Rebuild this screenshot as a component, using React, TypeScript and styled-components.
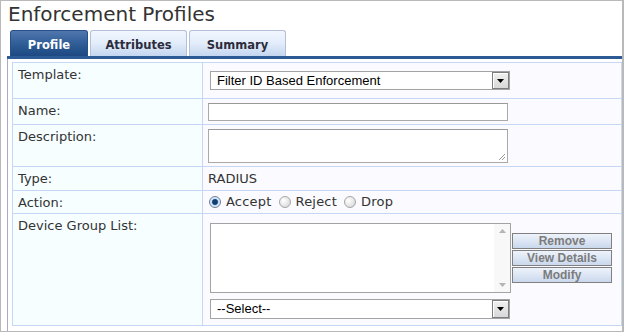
import React from 'react';
import styled, {createGlobalStyle} from 'styled-components';

const GlobalStyle = createGlobalStyle`
  html, body {
    margin: 0;
    padding: 0;
    background: #fff;
  }
  body {
    font-family: 'DejaVu Sans', Verdana, sans-serif;
  }
`;

const LINE = '#c6d7f3';

const Frame = styled.div`
  box-sizing: border-box;
  width: 624px;
  height: 332px;
  border: 1px solid #b9b9b9;
  border-right-width: 2px;
  display: flex;
  flex-direction: column;
`;

const Title = styled.h1`
  box-sizing: border-box;
  height: 29px;
  margin: 0;
  padding: 1px 0 0 7px;
  font: 400 20px/24px 'DejaVu Sans', Verdana, sans-serif;
  color: #333;
`;

const TabBar = styled.div`
  display: flex;
  align-items: flex-end;
  gap: 2px;
  height: 26px;
  margin-left: 6px;
  padding-left: 3px;
  border-bottom: 3px solid #2b5a95;
`;

const Tab = styled.div<{active?: boolean; w: number}>`
  box-sizing: border-box;
  width: ${p => p.w}px;
  height: 26px;
  padding-top: 7px;
  border: 1px solid ${p => (p.active ? '#27508a' : '#b4bfdc')};
  border-bottom: none;
  border-radius: 3px 3px 0 0;
  background: ${p =>
    p.active
      ? 'linear-gradient(#5177ad 0%, #33609a 45%, #1d4881 100%)'
      : 'linear-gradient(#f2f7fe 0%, #e2ecfa 50%, #c4d6ef 100%)'};
  color: ${p => (p.active ? '#fff' : '#2c2c3c')};
  font: 700 11.5px/14px 'DejaVu Sans', Verdana, sans-serif;
  text-align: center;
`;

const Content = styled.div`
  flex: 1;
  margin-left: 6px;
  padding: 3px 0 0 4px;
  border-left: 1px solid #a9abc9;
`;

const Table = styled.div`
  display: grid;
  width: 610px;
  box-sizing: border-box;
  grid-template-columns: 190px 1fr;
  grid-template-rows: 36px 26px 42px 24px 23px 112px;
  border-top: 1px solid ${LINE};
  border-left: 1px solid ${LINE};
`;

const Label = styled.div`
  box-sizing: border-box;
  padding: 4px 5px;
  background: #f6feff;
  border-right: 1px solid ${LINE};
  border-bottom: 1px solid ${LINE};
  font-size: 13px;
  line-height: 16px;
  color: #333;
`;

const Value = styled.div<{top?: boolean}>`
  box-sizing: border-box;
  display: flex;
  align-items: ${p => (p.top ? 'flex-start' : 'center')};
  padding: ${p => (p.top ? '9px 0 0 7px' : '0 0 0 5px')};
  background: #fafaff;
  border-right: 1px solid ${LINE};
  border-bottom: 1px solid ${LINE};
  font-size: 13px;
  line-height: 16px;
  color: #333;
`;

const SelectBox = styled.div<{h: number; indent?: number}>`
  box-sizing: border-box;
  display: flex;
  align-items: stretch;
  width: 300px;
  height: ${p => p.h}px;
  margin-left: ${p => p.indent ?? 0}px;
  border: 1px solid #a3a3a3;
  background: #fff;
`;

const SelectText = styled.span`
  flex: 1;
  padding-left: 6px;
  font: 13px/17px 'Liberation Sans', Arial, sans-serif;
  color: #000;
  white-space: nowrap;
  overflow: hidden;
`;

const ArrowButton = styled.span`
  box-sizing: border-box;
  width: 17px;
  display: flex;
  align-items: center;
  justify-content: center;
  border: 1px solid #7d7d7d;
  box-shadow: inset 1px 1px 0 #fff;
  background: linear-gradient(#f0f0f0, #d8d8d8);
`;

const Select = ({text, h, indent}: {text: string; h: number; indent?: number}) => (
  <SelectBox h={h} indent={indent}>
    <SelectText>{text}</SelectText>
    <ArrowButton>
      <svg width="7" height="4" viewBox="0 0 7 4">
        <path d="M0 0h7L3.5 4z" fill="#000" />
      </svg>
    </ArrowButton>
  </SelectBox>
);

const TextInput = styled.div`
  box-sizing: border-box;
  width: 300px;
  height: 18px;
  border: 1px solid #a9a9a9;
  border-top-color: #999;
  background: #fff;
`;

const TextArea = styled.div`
  position: relative;
  box-sizing: border-box;
  width: 300px;
  height: 34px;
  border: 1px solid #a9a9a9;
  border-top-color: #999;
  background: #fff;
`;

const Grip = styled.svg`
  position: absolute;
  right: 1px;
  bottom: 1px;
`;

const RadioGroup = styled.div`
  display: flex;
  align-items: center;
  padding-left: 1px;
`;

const RadioCircle = styled.span<{checked?: boolean}>`
  box-sizing: border-box;
  width: 12px;
  height: 12px;
  border-radius: 50%;
  border: 1px solid ${p => (p.checked ? '#6f7d95' : '#a6a6a6')};
  background: ${p =>
    p.checked
      ? 'radial-gradient(circle, #173d6e 0 2.4px, #4f86c4 2.9px, #cfe3f8 3.6px, #eef5fd 100%)'
      : 'radial-gradient(circle at 35% 35%, #ffffff 0, #e4e4e4 60%, #cfcfcf 100%)'};
`;

const RadioLabel = styled.span`
  margin: 0 7px 0 5px;
  letter-spacing: 0.2px;
`;

const DeviceColumn = styled.div`
  display: flex;
  flex-direction: column;
  gap: 6px;
`;

const ListBox = styled.div`
  box-sizing: border-box;
  display: flex;
  justify-content: flex-end;
  width: 301px;
  height: 70px;
  border: 1px solid #a3a3a3;
  background: #fff;
`;

const ScrollTrack = styled.div`
  width: 16px;
  display: flex;
  flex-direction: column;
  justify-content: space-between;
  align-items: center;
  padding: 5px 0;
  background: #f8f8f8;
`;

const ButtonStack = styled.div`
  display: flex;
  flex-direction: column;
  gap: 1px;
  margin: 10px 0 0 1px;
`;

const GrayButton = styled.div`
  box-sizing: border-box;
  width: 100px;
  height: 16px;
  border: 1px solid #808080;
  background: linear-gradient(#eef3fb, #cad8ed);
  font: 700 12px/14px 'Liberation Sans', Arial, sans-serif;
  color: #7c7c7c;
  text-align: center;
`;

const Triangle = ({up}: {up?: boolean}) => (
  <svg width="7" height="4" viewBox="0 0 7 4">
    <path d={up ? 'M0 4h7L3.5 0z' : 'M0 0h7L3.5 4z'} fill="#b4b4b4" />
  </svg>
);

export default function App() {
  return (
    <>
      <GlobalStyle />
      <Frame>
        <Title>Enforcement Profiles</Title>
        <TabBar>
          <Tab active w={78}>Profile</Tab>
          <Tab w={97}>Attributes</Tab>
          <Tab w={97}>Summary</Tab>
        </TabBar>
        <Content>
          <Table>
            <Label>Template:</Label>
            <Value>
              <Select text="Filter ID Based Enforcement" h={19} indent={2} />
            </Value>

            <Label>Name:</Label>
            <Value>
              <TextInput />
            </Value>

            <Label>Description:</Label>
            <Value>
              <TextArea>
                <Grip width="8" height="8" viewBox="0 0 8 8">
                  <path d="M7 1L1 7M7 4L4 7" stroke="#999" strokeWidth="1" />
                </Grip>
              </TextArea>
            </Value>

            <Label>Type:</Label>
            <Value>RADIUS</Value>

            <Label>Action:</Label>
            <Value>
              <RadioGroup>
                <RadioCircle checked />
                <RadioLabel>Accept</RadioLabel>
                <RadioCircle />
                <RadioLabel>Reject</RadioLabel>
                <RadioCircle />
                <RadioLabel>Drop</RadioLabel>
              </RadioGroup>
            </Value>

            <Label>Device Group List:</Label>
            <Value top>
              <DeviceColumn>
                <ListBox>
                  <ScrollTrack>
                    <Triangle up />
                    <Triangle />
                  </ScrollTrack>
                </ListBox>
                <Select text="--Select--" h={20} />
              </DeviceColumn>
              <ButtonStack>
                <GrayButton>Remove</GrayButton>
                <GrayButton>View Details</GrayButton>
                <GrayButton>Modify</GrayButton>
              </ButtonStack>
            </Value>
          </Table>
        </Content>
      </Frame>
    </>
  );
}
